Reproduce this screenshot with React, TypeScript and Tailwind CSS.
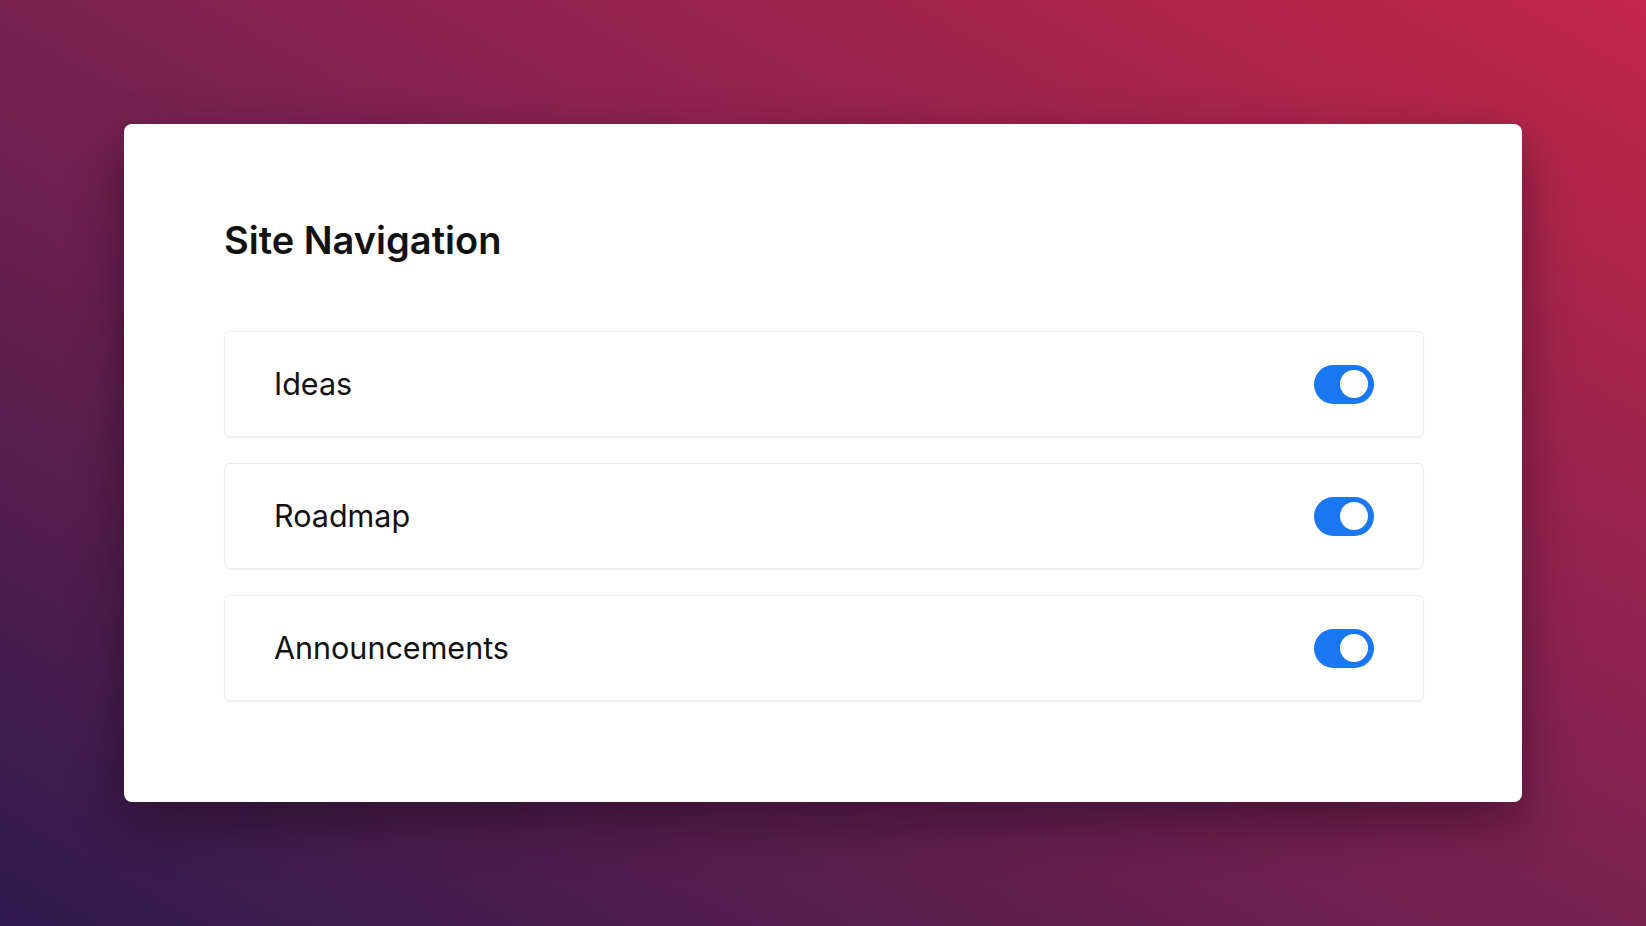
import { useState } from 'react'

const items = ['Ideas', 'Roadmap', 'Announcements']

function Toggle({ on, onChange }: { on: boolean; onChange: () => void }) {
  return (
    <button
      type="button"
      onClick={onChange}
      className={`flex h-[39px] w-[60px] items-center rounded-full px-[6px] transition-colors ${
        on ? 'justify-end bg-[#1a77f2]' : 'justify-start bg-gray-300'
      }`}
    >
      <span className="block h-[28px] w-[28px] rounded-full bg-white" />
    </button>
  )
}

export default function App() {
  const [enabled, setEnabled] = useState<Record<string, boolean>>({
    Ideas: true,
    Roadmap: true,
    Announcements: true,
  })

  return (
    <div className="flex min-h-screen items-center justify-center bg-[linear-gradient(to_top_right,#2f1a4d,#7a2150,#c3264a)] font-['Inter',sans-serif]">
      <div className="w-[1398px] rounded-lg bg-white pb-[101px] pl-[100px] pr-[98px] pt-[96px] shadow-[0_20px_50px_rgba(20,5,20,0.45)]">
        <h1 className="text-[38px] font-semibold leading-[40px] text-[#111111]">
          Site Navigation
        </h1>
        <div className="mt-[71px] flex flex-col gap-[26px]">
          {items.map((name) => (
            <div
              key={name}
              className="flex h-[106px] items-center justify-between rounded-md border border-[#ececee] pl-[49px] pr-[49px] shadow-[0_1px_2px_rgba(0,0,0,0.05)]"
            >
              <span className="text-[30.5px] text-[#111111]">{name}</span>
              <Toggle
                on={enabled[name]}
                onChange={() => setEnabled((s) => ({ ...s, [name]: !s[name] }))}
              />
            </div>
          ))}
        </div>
      </div>
    </div>
  )
}
